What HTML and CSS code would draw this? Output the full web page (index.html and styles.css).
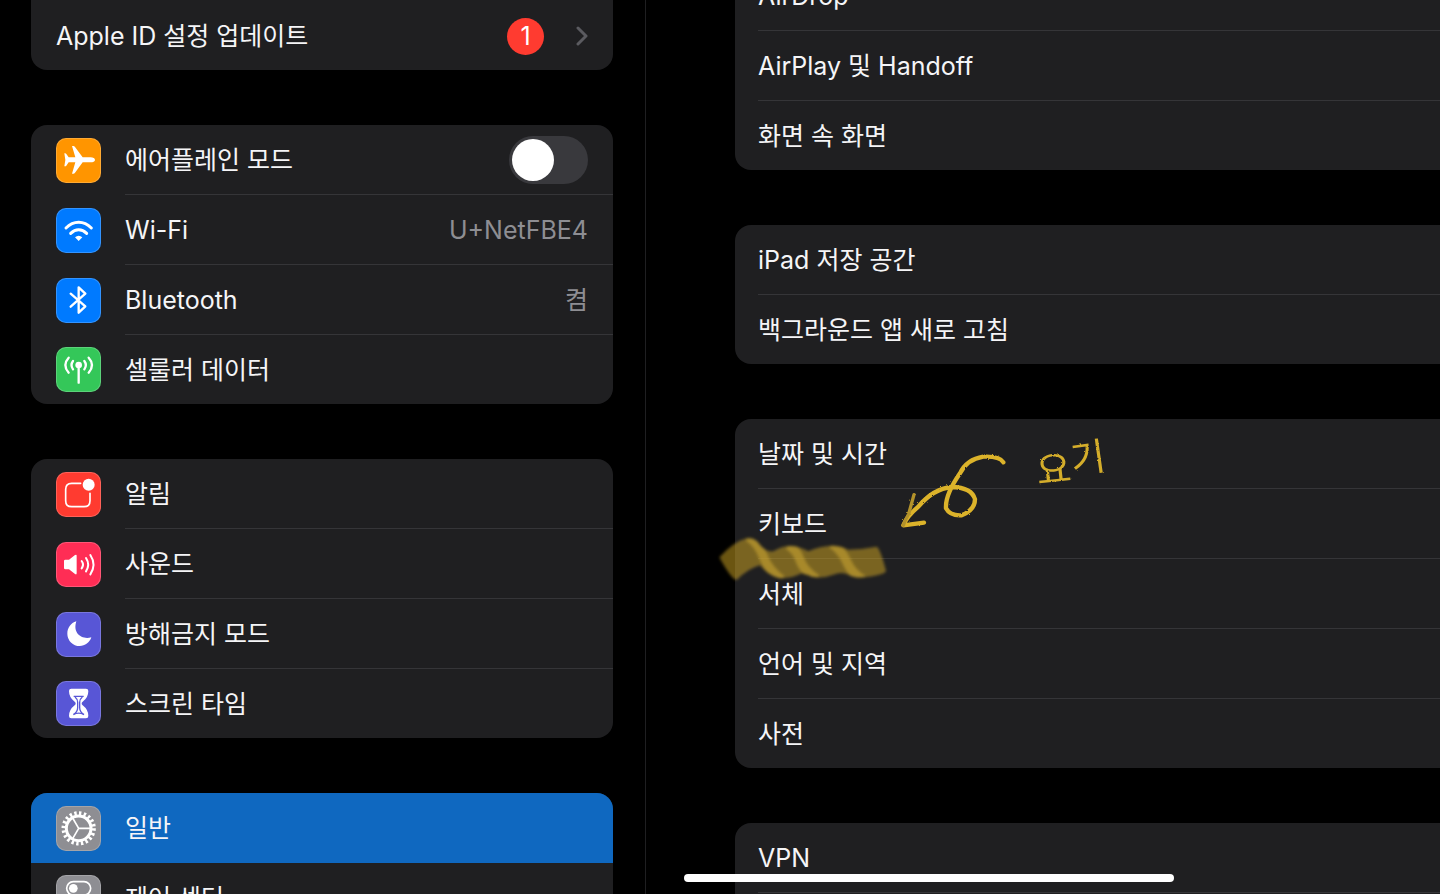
FILE: index.html
```html
<!DOCTYPE html>
<html lang="ko">
<head>
    <meta charset="UTF-8">
    <meta name="viewport" content="width=device-width, initial-scale=1.0">
    <title>설정</title>
    <link rel="stylesheet" href="styles.css">
</head>
<body>
    <div class="settings">
        <nav class="sidebar">
            <div class="group group-first">
                <a class="row" href="#">
                    <span class="row-body">
                        <span class="label">Apple ID 설정 업데이트</span>
                        <span class="badge">1</span>
                        <svg class="chevron" viewBox="0 0 12 20"><path d="M2 2l8 8-8 8"/></svg>
                    </span>
                </a>
            </div>

            <div class="group">
                <label class="row" for="airplane">
                    <svg class="icon orange" viewBox="0 0 135 135">
                        <path class="fill" d="M117 66c0-5-6-8-13-8H80L57 27Q55 24 52 24H48L58 58H38L31 48Q30 46 27 46H25L28 66 25 85H27Q30 85 31 83L38 73H58L48 107H52Q55 107 57 104L80 73H104c7 0 13-3 13-7z"/>
                    </svg>
                    <span class="row-body">
                        <span class="label">에어플레인 모드</span>
                        <input type="checkbox" id="airplane" class="switch">
                    </span>
                </label>
                <a class="row" href="#">
                    <svg class="icon blue" viewBox="0 0 135 135">
                        <path class="line" stroke-width="9" d="M30 60Q47 43 68 43T106 60M44 76Q55 65 68 65T92 76"/>
                        <path class="fill" d="M57 88Q68 78 79 88L68 99z"/>
                    </svg>
                    <span class="row-body">
                        <span class="label">Wi-Fi</span>
                        <span class="value">U+NetFBE4</span>
                    </span>
                </a>
                <a class="row" href="#">
                    <svg class="icon blue" viewBox="0 0 135 135">
                        <path class="line" stroke-width="7" d="M44 47L88 85 68 104V28L88 47 44 86"/>
                    </svg>
                    <span class="row-body">
                        <span class="label">Bluetooth</span>
                        <span class="value">켬</span>
                    </span>
                </a>
                <a class="row" href="#">
                    <svg class="icon green" viewBox="0 0 135 135">
                        <circle class="fill" cx="68" cy="54" r="10"/>
                        <path class="line" stroke-width="7" d="M68 56V107M51 42Q42 54 51 67M85 42Q94 54 85 67M38 32Q18 54 38 77M98 32Q118 54 98 77"/>
                    </svg>
                    <span class="row-body"><span class="label">셀룰러 데이터</span></span>
                </a>
            </div>

            <div class="group">
                <a class="row" href="#">
                    <svg class="icon red" viewBox="0 0 135 135">
                        <path class="line" stroke-width="5" d="M74 34H47Q29 34 29 52V86Q29 104 47 104H84Q102 104 102 86V64"/>
                        <circle class="fill" cx="98" cy="38" r="18"/>
                    </svg>
                    <span class="row-body"><span class="label">알림</span></span>
                </a>
                <a class="row" href="#">
                    <svg class="icon pink" viewBox="0 0 135 135">
                        <path class="fill" d="M24 57Q24 53 28 53H39L57 39Q62 36 62 41V94Q62 99 57 96L39 82H28Q24 82 24 78z"/>
                        <path class="line" stroke-width="6" d="M77 57Q85 68 77 79M90 48Q103 68 90 88M103 39Q122 68 103 97"/>
                    </svg>
                    <span class="row-body"><span class="label">사운드</span></span>
                </a>
                <a class="row" href="#">
                    <svg class="icon purple" viewBox="0 0 135 135">
                        <path class="fill" d="M61 28C44 33 34 48 34 65A37 37 0 0 0 71 102C87 102 101 92 106 76C78 84 49 65 61 28z"/>
                    </svg>
                    <span class="row-body"><span class="label">방해금지 모드</span></span>
                </a>
                <a class="row" href="#">
                    <svg class="icon purple" viewBox="0 0 135 135">
                        <path class="fill" d="M46 23H90Q97 23 97 30Q97 50 80 62Q74 67 80 73Q97 86 97 105Q97 112 90 112H46Q39 112 39 105Q39 86 56 73Q62 67 56 62Q39 50 39 30Q39 23 46 23z"/>
                        <path class="sand" d="M53 46H83M57 48Q65 54 65 64V80Q65 92 52 101M79 48Q71 54 71 64V80Q71 92 84 101M52 101Q68 92 84 101"/>
                    </svg>
                    <span class="row-body"><span class="label">스크린 타임</span></span>
                </a>
            </div>

            <div class="group">
                <a class="row selected" href="#" aria-current="page">
                    <svg class="icon gray" viewBox="0 0 135 135">
                        <circle class="line" cx="68" cy="67" r="37" stroke-width="9"/>
                        <circle class="teeth" cx="68" cy="67" r="45" pathLength="40"/>
                        <path class="line" stroke-width="5" d="M68 67H104M68 67L50 36M68 67L50 98"/>
                    </svg>
                    <span class="row-body"><span class="label">일반</span></span>
                </a>
                <a class="row" href="#">
                    <svg class="icon gray" viewBox="0 0 135 135">
                        <rect class="line" x="32" y="20" width="72" height="40" rx="20" stroke-width="5"/>
                        <circle class="fill" cx="52" cy="40" r="13"/>
                        <rect class="fill" x="30" y="72" width="76" height="44" rx="22"/>
                    </svg>
                    <span class="row-body"><span class="label">제어 센터</span></span>
                </a>
            </div>
        </nav>

        <main class="detail">
            <div class="group">
                <a class="row" href="#"><span class="row-body">AirDrop</span></a>
                <a class="row" href="#"><span class="row-body">AirPlay 및 Handoff</span></a>
                <a class="row" href="#"><span class="row-body">화면 속 화면</span></a>
            </div>
            <div class="group">
                <a class="row" href="#"><span class="row-body">iPad 저장 공간</span></a>
                <a class="row" href="#"><span class="row-body">백그라운드 앱 새로 고침</span></a>
            </div>
            <div class="group">
                <a class="row" href="#"><span class="row-body">날짜 및 시간</span></a>
                <a class="row" href="#"><span class="row-body">키보드</span></a>
                <a class="row" href="#"><span class="row-body">서체</span></a>
                <a class="row" href="#"><span class="row-body">언어 및 지역</span></a>
                <a class="row" href="#"><span class="row-body">사전</span></a>
            </div>
            <div class="group">
                <a class="row" href="#"><span class="row-body">VPN</span></a>
                <a class="row" href="#"><span class="row-body"></span></a>
            </div>

            <!-- pen and highlighter marks -->
            <svg class="markup" viewBox="0 0 1290 570">
                <defs>
                    <filter id="crayon" x="-10%" y="-10%" width="120%" height="120%">
                        <feTurbulence type="fractalNoise" baseFrequency="0.16" numOctaves="2" seed="4"/>
                        <feDisplacementMap in="SourceGraphic" scale="7"/>
                    </filter>
                    <filter id="soft"><feGaussianBlur stdDeviation="4"/></filter>
                    <clipPath id="band">
                        <path d="M58 412Q100 366 140 355Q165 352 178 372Q195 396 220 394Q250 376 275 378Q300 380 325 394Q360 378 400 377Q425 378 445 389Q490 388 530 380Q540 384 558 452Q556 464 500 471Q465 476 445 464Q425 454 400 464Q365 477 335 470Q315 462 305 460Q270 478 235 474Q205 466 180 436Q145 445 110 480Q95 480 58 412z"/>
                    </clipPath>
                </defs>
                <g filter="url(#soft)">
                    <g clip-path="url(#band)">
                        <rect class="marker" x="50" y="345" width="520" height="145"/>
                        <path class="marker-fold" d="M145 350Q175 370 190 410T245 480M265 375Q290 390 300 420T350 478M395 370Q425 390 440 425T490 480"/>
                    </g>
                </g>
                <g class="pen" filter="url(#crayon)">
                    <path d="M910 127Q900 108 850 110Q800 118 780 160Q735 225 738 265Q750 288 785 286Q825 270 825 238Q815 202 755 201Q700 206 655 260Q620 290 610 316L672 308"/>
                    <path class="pen-thin" d="M642 224L626 282Q615 300 610 316"/>
                    <text x="1008" y="190" transform="rotate(-6 1060 140)">요</text>
                    <text x="1112" y="156" transform="rotate(-8 1150 120)">기</text>
                </g>
            </svg>
        </main>
    </div>
    <div class="home-indicator"></div>
</body>
</html>
```

FILE: styles.css
```css
* {
    box-sizing: border-box;
}

body {
    margin: 0;
    height: 100vh;
    overflow: hidden;
    position: relative;
    background-color: #000;
    color: #f5f5f7;
    font-family: Inter, "Noto Sans CJK KR", sans-serif;
    font-size: 25px;
    line-height: 36px;
}

.settings {
    display: grid;
    grid-template-columns: 43fr 53fr;
    height: 100vh;
    overflow: hidden;
}

.sidebar {
    padding: 0 32px 0 31px;
}

.detail {
    position: relative;
    border-left: 1px solid #1f1f21;
    padding-left: 89px;
}

.group {
    background-color: #1f1f21;
    border-radius: 16px;
    overflow: hidden;
    margin-bottom: 55px;
}

/* the list is scrolled a little past its first row */
.detail .group:first-child {
    margin-top: -39px;
}

.detail .group {
    border-radius: 16px 0 0 16px;
}

.row {
    display: flex;
    align-items: center;
    gap: 24px;
    color: inherit;
    text-decoration: none;
}

.sidebar .row {
    padding-left: 25px;
}

.detail .row {
    padding-left: 23px;
}

.row-body {
    flex: 1;
    display: flex;
    align-items: center;
    height: 70px;
    padding-top: 1px;
    padding-right: 25px;
    border-bottom: 1px solid #353538;
}

.row:last-child .row-body {
    border-bottom: none;
    height: 69px;
}

.group-first {
    border-radius: 0 0 16px 16px;
    padding-top: 1px;
}

.row.selected {
    background-color: #0f68c0;
}

.row.selected .row-body {
    border-bottom-color: transparent;
}

.label {
    flex: 1;
}

.value {
    color: #8e8e93;
}

.badge {
    width: 37px;
    height: 37px;
    border-radius: 50%;
    background-color: #ff3b30;
    color: #fff;
    text-align: center;
}

.chevron {
    width: 12px;
    height: 20px;
    margin-left: 32px;
    fill: none;
    stroke: #5b5b60;
    stroke-width: 3;
    stroke-linecap: round;
    stroke-linejoin: round;
}

.switch {
    appearance: none;
    width: 79px;
    height: 48px;
    margin: 0;
    padding: 3px;
    border-radius: 24px;
    background-color: #39393d;
}

.switch::before {
    content: "";
    display: block;
    width: 42px;
    height: 42px;
    border-radius: 50%;
    background-color: #fff;
}

.switch:checked {
    background-color: #34c759;
}

.switch:checked::before {
    margin-left: auto;
}

/* icons */
.icon {
    width: 45px;
    height: 45px;
    border-radius: 10px;
    box-shadow: inset 0 0 0 1px rgba(255, 255, 255, 0.2);
}

.fill {
    fill: #fff;
}

.line {
    fill: none;
    stroke: #fff;
    stroke-linecap: round;
    stroke-linejoin: round;
}

.teeth {
    fill: none;
    stroke: #fff;
    stroke-width: 13;
    stroke-dasharray: 1 1;
}

.sand {
    fill: none;
    stroke: #5856d6;
    stroke-width: 4;
}

.orange { background-color: #ff9500; }
.blue { background-color: #007aff; }
.green { background-color: #34c759; }
.red { background-color: #ff3b30; }
.pink { background-color: #ff2d55; }
.purple { background-color: #5856d6; }
.gray { background-color: #8e8e93; }

/* pen marks over the list */
.markup {
    position: absolute;
    left: 54px;
    top: 420px;
    width: 430px;
    height: 190px;
    pointer-events: none;
}

.pen path {
    fill: none;
    stroke: #dcb32b;
    stroke-width: 13;
    stroke-linecap: round;
    stroke-linejoin: round;
}

.pen .pen-thin {
    stroke: #b3922a;
    stroke-width: 10;
}

.pen text {
    fill: #d4ad2c;
    font-family: "Noto Sans CJK KR", sans-serif;
    font-size: 114px;
}

.marker {
    fill: rgba(214, 170, 38, 0.5);
}

.marker-fold {
    fill: none;
    stroke: rgba(214, 174, 46, 0.5);
    stroke-width: 28;
}

.home-indicator {
    position: absolute;
    left: 684px;
    bottom: 12px;
    width: 490px;
    height: 8px;
    border-radius: 4px;
    background-color: #fff;
}
```
